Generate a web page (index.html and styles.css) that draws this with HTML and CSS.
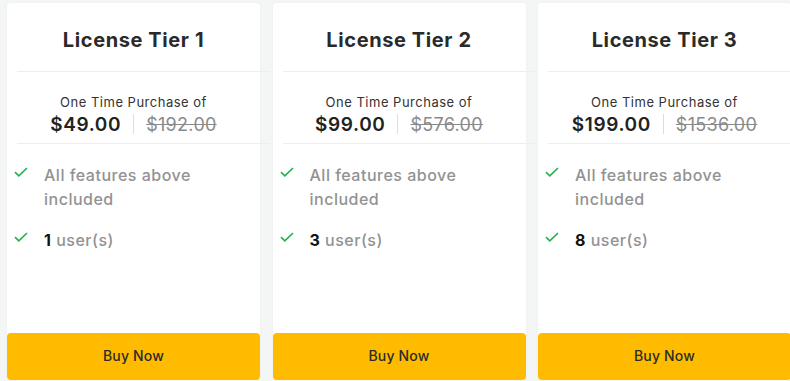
FILE: index.html
```html
<!DOCTYPE html>
<html lang="en">
<head>
    <meta charset="UTF-8">
    <meta name="viewport" content="width=device-width, initial-scale=1.0">
    <title>License Tiers</title>
    <link rel="stylesheet" href="styles.css">
</head>
<body>
    <div class="tiers">
        <div class="card">
            <h2 class="card-title">License Tier 1</h2>
            <div class="divider"></div>
            <div class="price-box">
                <p class="price-label">One Time Purchase of</p>
                <div class="price-row">
                    <span class="price">$49.00</span>
                    <span class="price-sep"></span>
                    <span class="price-old">$192.00</span>
                </div>
            </div>
            <div class="divider"></div>
            <ul class="features">
                <li>
                    <svg class="check" viewBox="0 0 14 10" width="14" height="10"><path d="M1 5.2l3.8 3.6L13 1" fill="none" stroke="#22b14c" stroke-width="1.6"/></svg>
                    <span>All features above included</span>
                </li>
                <li>
                    <svg class="check" viewBox="0 0 14 10" width="14" height="10"><path d="M1 5.2l3.8 3.6L13 1" fill="none" stroke="#22b14c" stroke-width="1.6"/></svg>
                    <span><b>1</b> user(s)</span>
                </li>
            </ul>
            <button class="buy-button">Buy Now</button>
        </div>

        <div class="card">
            <h2 class="card-title">License Tier 2</h2>
            <div class="divider"></div>
            <div class="price-box">
                <p class="price-label">One Time Purchase of</p>
                <div class="price-row">
                    <span class="price">$99.00</span>
                    <span class="price-sep"></span>
                    <span class="price-old">$576.00</span>
                </div>
            </div>
            <div class="divider"></div>
            <ul class="features">
                <li>
                    <svg class="check" viewBox="0 0 14 10" width="14" height="10"><path d="M1 5.2l3.8 3.6L13 1" fill="none" stroke="#22b14c" stroke-width="1.6"/></svg>
                    <span>All features above included</span>
                </li>
                <li>
                    <svg class="check" viewBox="0 0 14 10" width="14" height="10"><path d="M1 5.2l3.8 3.6L13 1" fill="none" stroke="#22b14c" stroke-width="1.6"/></svg>
                    <span><b>3</b> user(s)</span>
                </li>
            </ul>
            <button class="buy-button">Buy Now</button>
        </div>

        <div class="card">
            <h2 class="card-title">License Tier 3</h2>
            <div class="divider"></div>
            <div class="price-box">
                <p class="price-label">One Time Purchase of</p>
                <div class="price-row">
                    <span class="price">$199.00</span>
                    <span class="price-sep"></span>
                    <span class="price-old">$1536.00</span>
                </div>
            </div>
            <div class="divider"></div>
            <ul class="features">
                <li>
                    <svg class="check" viewBox="0 0 14 10" width="14" height="10"><path d="M1 5.2l3.8 3.6L13 1" fill="none" stroke="#22b14c" stroke-width="1.6"/></svg>
                    <span>All features above included</span>
                </li>
                <li>
                    <svg class="check" viewBox="0 0 14 10" width="14" height="10"><path d="M1 5.2l3.8 3.6L13 1" fill="none" stroke="#22b14c" stroke-width="1.6"/></svg>
                    <span><b>8</b> user(s)</span>
                </li>
            </ul>
            <button class="buy-button">Buy Now</button>
        </div>
    </div>
</body>
</html>
```

FILE: styles.css
```css
/* Reset some default styles */
body, h2, ul, p {
    margin: 0;
    padding: 0;
}

body {
    font-family: Inter, "Noto Sans", sans-serif;
    background-color: #f4f6f6;
    overflow: hidden;
}

/* Tier columns */
.tiers {
    display: flex;
    gap: 12.5px;
    padding: 3px 0 0 7px;
}

.card {
    flex: 0 0 253px;
    height: 377px;
    display: flex;
    flex-direction: column;
    background-color: #fff;
    border-radius: 4px;
    box-shadow: 0 0 3px rgba(0, 0, 0, 0.04);
}

.card-title {
    font-size: 20px;
    font-weight: 700;
    line-height: 28px;
    letter-spacing: 0.6px;
    color: #2a2a2a;
    text-align: center;
    padding: 23px 0 17px;
}

/* Divider lines run a little past the card edge */
.divider {
    margin-left: 10px;
    width: 100%;
    flex: 0 0 1px;
    background-color: #eeeeee;
}

/* Price block */
.price-box {
    text-align: center;
    padding: 20px 0 7px;
}

.price-label {
    font-size: 13px;
    line-height: 20px;
    letter-spacing: 0.5px;
    color: #333;
}

.price-row {
    display: flex;
    justify-content: center;
    align-items: center;
    gap: 12px;
    height: 24px;
}

.price {
    font-size: 19px;
    font-weight: 600;
    letter-spacing: 0.6px;
    color: #222;
}

.price-sep {
    width: 1px;
    height: 20px;
    background-color: #dddddd;
}

.price-old {
    font-size: 18px;
    letter-spacing: 0.3px;
    color: #8a8a8a;
    text-decoration: line-through;
}

/* Feature list */
.features {
    list-style-type: none;
    padding: 19px 10px 0 7px;
    display: flex;
    flex-direction: column;
    gap: 17px;
}

.features li {
    display: flex;
    align-items: flex-start;
    gap: 16px;
    font-size: 16px;
    font-weight: 500;
    line-height: 24px;
    letter-spacing: 0.5px;
    color: #929292;
    padding-right: 50px;
}

.features b {
    color: #111;
    font-weight: 700;
}

.check {
    flex: 0 0 14px;
    margin-top: 4px;
}

/* Buy button */
.buy-button {
    margin-top: auto;
    height: 47px;
    padding: 0 0 3px;
    border: none;
    border-radius: 4px;
    background-color: #ffbb00;
    color: #2b2b2b;
    font-family: inherit;
    font-size: 14px;
    font-weight: 500;
    letter-spacing: 0.2px;
    cursor: pointer;
}

.buy-button:hover {
    background-color: #f0ae00;
}
```
